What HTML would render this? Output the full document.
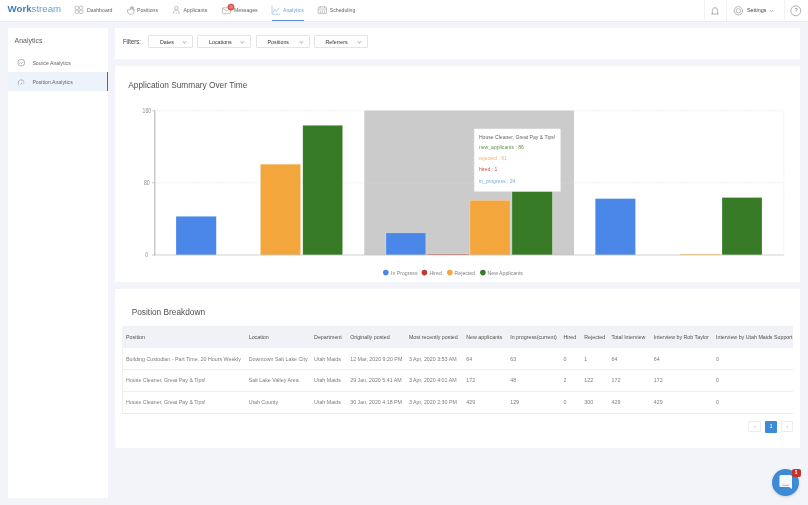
<!DOCTYPE html>
<html><head><meta charset="utf-8">
<style>
*{margin:0;padding:0;box-sizing:border-box}
html,body{-webkit-font-smoothing:antialiased;width:808px;height:505px;overflow:hidden;background:#f3f4f9;font-family:"Liberation Sans",sans-serif;color:#555}
.abs{position:absolute}
.t{position:absolute;white-space:nowrap;line-height:1}
#hdr{position:absolute;left:0;top:0;width:808px;height:22.3px;background:#fff;border-bottom:1.3px solid #eaecf3}
.card{position:absolute;background:#fff}
.nav{font-size:5.2px;color:#666}

.btn{position:absolute;top:35px;height:13.4px;border:0.8px solid #e4e4e4;border-radius:1px;background:#fff}
.btn span{position:absolute;top:4px;font-size:5.3px;color:#333;white-space:nowrap;line-height:1}
.chev{position:absolute;top:4.2px;width:2.8px;height:2.8px;border-right:0.6px solid #c4c4c4;border-bottom:0.6px solid #c4c4c4;transform:rotate(45deg)}
.th{font-size:5.3px;color:#505050}
.td{font-size:5.3px;color:#7d7d7d}
</style></head><body><div id="root" style="position:absolute;left:0;top:0;width:808px;height:505px;will-change:transform">

<!-- header -->
<div id="hdr"></div>
<div class="t" style="left:7.5px;top:4.4px;font-size:9.7px;color:#69a1d8;letter-spacing:0"><b style="color:#447dbb">Work</b>stream</div>

<div class="t nav" style="left:87px;top:8px">Dashboard</div>
<div class="t nav" style="left:137px;top:8px">Positions</div>
<div class="t nav" style="left:183.4px;top:8px">Applicants</div>
<div class="t nav" style="left:234px;top:8px">Messages</div>
<div class="t nav" style="left:283px;top:8px;color:#6d9fd8">Analytics</div>
<div class="abs" style="left:271.8px;top:19.8px;width:32.2px;height:1.4px;background:#5f93d2"></div>
<div class="t nav" style="left:329.7px;top:8px">Scheduling</div>

<div class="abs" style="left:703.5px;top:0;width:0.8px;height:21px;background:#f2f2f5"></div>
<div class="abs" style="left:726px;top:0;width:0.8px;height:21px;background:#f2f2f5"></div>
<div class="abs" style="left:784.2px;top:0;width:0.8px;height:21px;background:#f2f2f5"></div>
<div class="t nav" style="left:747px;top:8.2px;color:#444;font-size:5.4px">Settings</div>


<!-- header icons -->
<svg class="abs" style="left:0;top:0" width="808" height="30" fill="none" stroke="#9a9a9a" stroke-width="0.6">
<rect x="75.2" y="6.2" width="3.3" height="3.3" rx="1"/><rect x="79.5" y="6.2" width="3.3" height="3.3" rx="1"/>
<rect x="75.2" y="10.2" width="3.3" height="3.3" rx="1"/><rect x="79.5" y="10.2" width="3.3" height="3.3" rx="1"/>
<path d="M127.4 9.5 q-0.5 3 1.6 4.6 q2.4 1 4.4-0.6 q1-1.2 0.6-4.5 l-0.6 1.5 l-0.2-3.5 l-0.9 2.4 l-0.3-3.5 l-0.9 3.3 l-0.6-2 l-0.3 2.8 z"/>
<circle cx="176.3" cy="8" r="1.7"/>
<path d="M173.4 13.2 q0.2-3 2.9-3.3 q2.7 0.3 2.9 3.3 M172.8 13.3 h1 M175.8 13.3 h1 M178.6 13.3 h1" />
<rect x="222.4" y="7.8" width="8" height="5.8" rx="0.8"/>
<path d="M222.6 8.2 l3.9 2.8 l3.9-2.8"/>
<path d="M272 5.6 v8.6 h8" stroke="#8fb3dc"/>
<path d="M272.8 12.3 l2-2.6 l1.7 1.5 l2.6-3" stroke="#6f9fd6"/>
<rect x="318.2" y="7" width="8.3" height="6.6" rx="0.8"/>
<path d="M318.2 9.1 h8.3 M320.2 6 v1.5 M324.5 6 v1.5 M320.3 10.5 v2.5 M322.35 10.5 v2.5 M324.4 10.5 v2.5"/>
<path d="M711.4 14 h7.2 M712.3 14 v-3.4 q0.1-2.9 2.7-3 q2.6 0.1 2.7 3 v3.4" stroke="#8a8a8a" stroke-width="0.65"/>
<circle cx="738.3" cy="10.8" r="4.2" stroke="#8a8a8a"/>
<path d="M738.3 8.4 l2.1 1.2 v2.4 l-2.1 1.2 l-2.1-1.2 v-2.4z" stroke="#8a8a8a"/>
<path d="M769.9 10.3 l1.5 1.4 l1.5-1.4" stroke="#777" stroke-width="0.6"/>
<circle cx="795.8" cy="10.8" r="5" stroke="#8a8a8a" stroke-width="0.65"/>
</svg>
<div class="t" style="left:794.6px;top:8px;font-size:5.8px;color:#888">?</div>
<svg class="abs" style="left:0;top:0" width="240" height="20">
<circle cx="231" cy="7.1" r="3.1" fill="#e46060" stroke="#c93a3a" stroke-width="0.7"/>
</svg>
<div class="t" style="left:229.4px;top:5.8px;font-size:2.8px;color:#f7b5b5">10</div>


<!-- sidebar -->
<div class="card" style="left:7.5px;top:28px;width:100.5px;height:469.6px"></div>
<div class="t" style="left:14.5px;top:37px;font-size:7px;color:#5e5e5e">Analytics</div>
<div class="abs" style="left:7.5px;top:71.8px;width:100px;height:19.2px;background:#ecf3fb"></div>
<div class="abs" style="left:106.6px;top:72px;width:1.4px;height:18.9px;background:#526b82"></div>
<div class="t" style="left:32.4px;top:61px;font-size:5.2px;color:#666">Source Analytics</div>
<div class="t" style="left:32.4px;top:80px;font-size:5.2px;color:#666">Position Analytics</div>

<!-- sidebar icons -->
<svg class="abs" style="left:0;top:0" width="40" height="100" fill="none" stroke="#9a9a9a" stroke-width="0.75">
<rect x="18" y="59.4" width="6.5" height="6.5" rx="2.6"/>
<path d="M19.3 63.9 l1.3-1.3 l1.1 0.9 l1.6-1.6"/>
<path d="M18.2 84.6 q-0.8-4 2.4-4.8 q2.8-0.4 3.4 2.4 M20.6 84.8 l1.4-2.2 M23.2 83.4 h1"/>
</svg>
<!-- filter card -->
<div class="card" style="left:115.4px;top:27.8px;width:684.9px;height:30.8px"></div>
<div class="t" style="left:122.8px;top:38.6px;font-size:6.6px;color:#3a3a3a;transform:scaleX(0.9);transform-origin:0 0">Filters:</div>
<div class="btn" style="left:148px;width:45px"><span style="left:11px">Dates</span><i class="chev" style="left:34px"></i></div>
<div class="btn" style="left:197px;width:54px"><span style="left:11px">Locations</span><i class="chev" style="left:43px"></i></div>
<div class="btn" style="left:256px;width:53.5px"><span style="left:10.5px">Positions</span><i class="chev" style="left:43px"></i></div>
<div class="btn" style="left:314px;width:54px"><span style="left:10.5px">Referrers</span><i class="chev" style="left:43px"></i></div>

<!-- chart card -->
<div class="card" style="left:115.4px;top:65.5px;width:684.9px;height:216.4px"></div>
<div class="t" style="left:128.3px;top:80.5px;font-size:8.3px;color:#505050">Application Summary Over Time</div>


<!-- chart -->
<svg class="abs" style="left:0;top:0" width="808" height="505" viewBox="0 0 808 505">
<rect x="364.3" y="110.5" width="209.7" height="144.5" fill="#cbcbcb"/>
<line x1="154.5" y1="110.8" x2="783.8" y2="110.8" stroke="#dedede" stroke-width="0.6" stroke-dasharray="1.2 1"/>
<line x1="154.5" y1="182.8" x2="783.8" y2="182.8" stroke="#dedede" stroke-width="0.6" stroke-dasharray="1.2 1"/>
<line x1="783.8" y1="110.8" x2="783.8" y2="255" stroke="#e4e4e4" stroke-width="0.6" stroke-dasharray="1.2 1"/>
<rect x="176" y="216.3" width="40.3" height="38.7" fill="#4a87e8" stroke="#fff" stroke-opacity="0.45" stroke-width="0.5"/>
<rect x="260.4" y="164.2" width="40.2" height="90.8" fill="#f2a63c" stroke="#fff" stroke-opacity="0.45" stroke-width="0.5"/>
<rect x="302.8" y="125.3" width="39.8" height="129.7" fill="#377b27" stroke="#fff" stroke-opacity="0.45" stroke-width="0.5"/>
<rect x="386" y="232.9" width="39.8" height="22.1" fill="#4a87e8" stroke="#fff" stroke-opacity="0.45" stroke-width="0.5"/>
<rect x="427.4" y="254.1" width="41.6" height="0.9" fill="#c0392b" stroke="#fff" stroke-opacity="0.45" stroke-width="0.5"/>
<rect x="470" y="200.3" width="40" height="54.7" fill="#f2a63c" stroke="#fff" stroke-opacity="0.45" stroke-width="0.5"/>
<rect x="512" y="177.5" width="40.3" height="77.5" fill="#377b27" stroke="#fff" stroke-opacity="0.45" stroke-width="0.5"/>
<rect x="595.2" y="198.6" width="40.3" height="56.4" fill="#4a87e8" stroke="#fff" stroke-opacity="0.45" stroke-width="0.5"/>
<rect x="680" y="254.1" width="40.5" height="0.9" fill="#f2a63c" stroke="#fff" stroke-opacity="0.45" stroke-width="0.5"/>
<rect x="722" y="197.5" width="40" height="57.5" fill="#377b27" stroke="#fff" stroke-opacity="0.45" stroke-width="0.5"/>
<line x1="154.8" y1="110.5" x2="154.8" y2="255.5" stroke="#b0b0b0" stroke-width="1"/>
<line x1="154.5" y1="255" x2="783.8" y2="255" stroke="#bbb" stroke-width="0.7"/>
<line x1="152" y1="110.8" x2="154.5" y2="110.8" stroke="#aaa" stroke-width="0.6"/>
<line x1="152" y1="182.8" x2="154.5" y2="182.8" stroke="#aaa" stroke-width="0.6"/>
<line x1="152" y1="255" x2="154.5" y2="255" stroke="#aaa" stroke-width="0.6"/>
<g font-family="Liberation Sans" font-size="6.6" fill="#8c8c8c" text-anchor="end">
<text transform="translate(151.2 112.9) scale(0.78 1)">160</text>
<text transform="translate(149.7 185) scale(0.78 1)">80</text>
<text transform="translate(148.1 257.3) scale(0.78 1)">0</text>
</g>
<rect x="474.1" y="128.9" width="86.5" height="62.6" fill="#fff" stroke="#e6e6e6" stroke-width="0.5"/>
<g font-family="Liberation Sans" font-size="5.1">
<text x="478.9" y="139.3" fill="#666">House Cleaner, Great Pay &amp; Tips!</text>
<text x="478.9" y="148.9" fill="#5f9450">new_applicants : 86</text>
<text x="478.9" y="159.8" fill="#f0b36a">rejected : 61</text>
<text x="478.9" y="171.4" fill="#c0504d">hired : 1</text>
<text x="478.9" y="182.8" fill="#7ea6e0">in_progress : 24</text>
</g>
<g font-family="Liberation Sans" font-size="5.2" fill="#858585">
<circle cx="385.8" cy="272.6" r="2.8" fill="#4a87e8"/><text x="391" y="274.8">In Progress</text>
<circle cx="424.4" cy="272.6" r="2.8" fill="#c0392b"/><text x="429.4" y="274.8">Hired</text>
<circle cx="449.8" cy="272.6" r="2.8" fill="#f2a63c"/><text x="454.6" y="274.8">Rejected</text>
<circle cx="482.9" cy="272.6" r="2.8" fill="#377b27"/><text x="487.5" y="274.8">New Applicants</text>
</g>
</svg>

<!-- table card -->
<div class="card" style="left:115.4px;top:289.3px;width:684.9px;height:158.6px"></div>
<div class="t" style="left:131.7px;top:307.5px;font-size:8.3px;color:#505050">Position Breakdown</div>

<!-- table -->
<div class="abs" style="left:122.4px;top:326.7px;width:670.8px;height:87px;border:0.6px solid #eef0f4;border-right:none"></div>
<div class="abs" style="left:122.4px;top:326.1px;width:670.8px;height:21.6px;background:#f1f2f7"></div>
<div class="abs" style="left:122.4px;top:369.2px;width:670.8px;height:0.6px;background:#eceef2"></div>
<div class="abs" style="left:122.4px;top:391px;width:670.8px;height:0.6px;background:#eceef2"></div>
<div class="abs" style="left:122.4px;top:412.9px;width:670.8px;height:0.7px;background:#e8eaee"></div>
<div class="abs" style="left:122.4px;top:326.7px;width:670.8px;height:87px;overflow:hidden">
<div class="t th" style="left:3.7px;top:8.0px">Position</div>
<div class="t th" style="left:126.3px;top:8.0px">Location</div>
<div class="t th" style="left:191.7px;top:8.0px">Department</div>
<div class="t th" style="left:227.8px;top:8.0px">Originally posted</div>
<div class="t th" style="left:286.5px;top:8.0px">Most recently posted</div>
<div class="t th" style="left:343.9px;top:8.0px">New applicants</div>
<div class="t th" style="left:387.8px;top:8.0px">In progress(current)</div>
<div class="t th" style="left:441.1px;top:8.0px">Hired</div>
<div class="t th" style="left:461.9px;top:8.0px">Rejected</div>
<div class="t th" style="left:489.1px;top:8.0px">Total Interview</div>
<div class="t th" style="left:531.4px;top:8.0px">Interview by Rob Taylor</div>
<div class="t th" style="left:593.6px;top:8.0px">Interview by Utah Maids Support</div>
<div class="t td" style="left:3.7px;top:29.9px">Building Custodian - Part Time, 20 Hours Weekly</div>
<div class="t td" style="left:126.3px;top:29.9px">Downtown Salt Lake City</div>
<div class="t td" style="left:191.7px;top:29.9px">Utah Maids</div>
<div class="t td" style="left:227.8px;top:29.9px">12 Mar, 2020 9:20 PM</div>
<div class="t td" style="left:286.5px;top:29.9px">3 Apr, 2020 3:53 AM</div>
<div class="t td" style="left:343.9px;top:29.9px">64</div>
<div class="t td" style="left:387.8px;top:29.9px">63</div>
<div class="t td" style="left:441.1px;top:29.9px">0</div>
<div class="t td" style="left:461.9px;top:29.9px">1</div>
<div class="t td" style="left:489.1px;top:29.9px">64</div>
<div class="t td" style="left:531.4px;top:29.9px">64</div>
<div class="t td" style="left:593.6px;top:29.9px">0</div>
<div class="t td" style="left:3.7px;top:51.6px">House Cleaner, Great Pay &amp; Tips!</div>
<div class="t td" style="left:126.3px;top:51.6px">Salt Lake Valley Area</div>
<div class="t td" style="left:191.7px;top:51.6px">Utah Maids</div>
<div class="t td" style="left:227.8px;top:51.6px">29 Jan, 2020 5:41 AM</div>
<div class="t td" style="left:286.5px;top:51.6px">3 Apr, 2020 4:01 AM</div>
<div class="t td" style="left:343.9px;top:51.6px">172</div>
<div class="t td" style="left:387.8px;top:51.6px">48</div>
<div class="t td" style="left:441.1px;top:51.6px">2</div>
<div class="t td" style="left:461.9px;top:51.6px">122</div>
<div class="t td" style="left:489.1px;top:51.6px">172</div>
<div class="t td" style="left:531.4px;top:51.6px">172</div>
<div class="t td" style="left:593.6px;top:51.6px">0</div>
<div class="t td" style="left:3.7px;top:73.4px">House Cleaner, Great Pay &amp; Tips!</div>
<div class="t td" style="left:126.3px;top:73.4px">Utah County</div>
<div class="t td" style="left:191.7px;top:73.4px">Utah Maids</div>
<div class="t td" style="left:227.8px;top:73.4px">30 Jan, 2020 4:18 PM</div>
<div class="t td" style="left:286.5px;top:73.4px">3 Apr, 2020 2:30 PM</div>
<div class="t td" style="left:343.9px;top:73.4px">429</div>
<div class="t td" style="left:387.8px;top:73.4px">129</div>
<div class="t td" style="left:441.1px;top:73.4px">0</div>
<div class="t td" style="left:461.9px;top:73.4px">300</div>
<div class="t td" style="left:489.1px;top:73.4px">429</div>
<div class="t td" style="left:531.4px;top:73.4px">429</div>
<div class="t td" style="left:593.6px;top:73.4px">0</div>
</div>
<!-- pagination -->
<div class="abs" style="left:748.3px;top:420.9px;width:13px;height:11.6px;border:0.6px solid #ececec;border-radius:1px;background:#fff"></div>
<div class="abs" style="left:765px;top:420.9px;width:12.1px;height:11.9px;border-radius:1px;background:#3d8ad6"></div>
<div class="t" style="left:769.6px;top:424.4px;font-size:5.5px;color:#fff">1</div>
<div class="abs" style="left:781.2px;top:420.9px;width:12px;height:11.6px;border:0.6px solid #ececec;border-radius:1px;background:#fff"></div>
<div class="abs" style="left:753.6px;top:425.6px;width:2.2px;height:2.2px;border-left:0.5px solid #ddd;border-bottom:0.5px solid #ddd;transform:rotate(45deg)"></div>
<div class="abs" style="left:785.8px;top:425.6px;width:2.2px;height:2.2px;border-right:0.5px solid #ddd;border-top:0.5px solid #ddd;transform:rotate(45deg)"></div>
<!-- chat -->
<div class="abs" style="left:772px;top:469px;width:27.2px;height:27.2px;border-radius:50%;background:#3d8ad6;box-shadow:0 1px 3px rgba(0,0,0,.15)"></div>
<svg class="abs" style="left:0;top:0" width="808" height="505">
<path d="M779.4 476.5 q0-1.5 1.5-1.5 h9.6 q1.5 0 1.5 1.5 v12.4 l-3.1-1.9 h-8 q-1.5 0-1.5-1.5z" fill="#f4f9fd"/>
<path d="M782.2 485 q3.5 1 7 0" stroke="#8a9aa8" stroke-width="0.7" fill="none"/>
</svg>
<div class="abs" style="left:791.9px;top:468.6px;width:8.7px;height:8.7px;border-radius:2px;background:#c8302c"></div>
<div class="t" style="left:794.6px;top:470.3px;font-size:5.5px;color:#fff;font-weight:bold">1</div>

</div></body></html>
